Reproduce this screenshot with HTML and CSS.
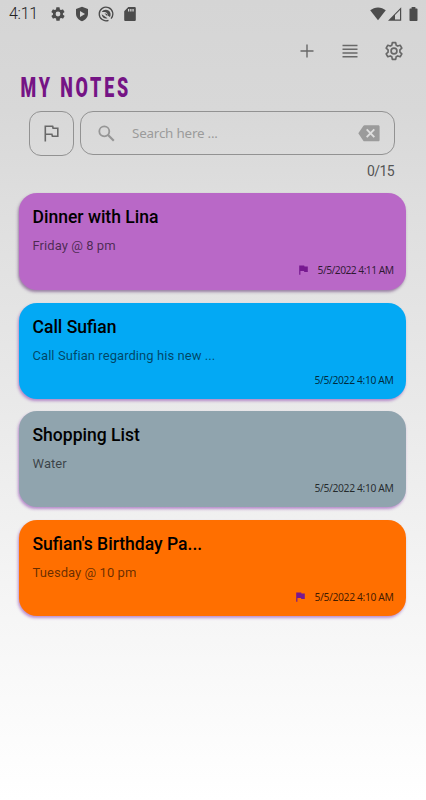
FILE: index.html
```html
<!DOCTYPE html>
<html lang="en">
<head>
<meta charset="utf-8">
<title>My Notes</title>
<link rel="stylesheet" href="styles.css">
</head>
<body>
<header class="status">
  <span class="clock">4:11</span>
  <svg class="s-gear" width="16" height="16" viewBox="0 0 24 24"><path d="M19.4 13a7.500 7.500 0 0 0 0-2l2.100-1.600a.5.5 0 0 0 .1-.7l-2-3.400a.5.5 0 0 0-.6-.2l-2.500 1a7.300 7.300 0 0 0-1.700-1L14.400 2.400a.5.5 0 0 0-.5-.4h-4a.5.5 0 0 0-.5.4L9 5.100a7.700 7.700 0 0 0-1.700 1l-2.500-1a.5.5 0 0 0-.6.2l-2 3.400a.5.5 0 0 0 .1.700L4.500 11a8 8 0 0 0 0 2l-2.100 1.600a.5.5 0 0 0-.1.700l2 3.400c.1.200.4.300.6.200l2.500-1a7.300 7.300 0 0 0 1.700 1l.4 2.700c0 .2.200.4.500.4h4c.2 0 .5-.2.5-.4l.4-2.700a7.700 7.700 0 0 0 1.700-1l2.500 1c.2.100.5 0 .6-.2l2-3.400a.5.5 0 0 0-.1-.7zM12 15.600a3.600 3.600 0 1 1 0-7.200 3.600 3.600 0 0 1 0 7.200z"/></svg>
  <svg class="s-shield" width="16" height="16" viewBox="0 0 16 16"><path fill-rule="evenodd" d="M8 .8l6 2.300v4.700c0 3.400-2.500 6.300-6 7.500-3.500-1.200-6-4.100-6-7.500V3.100zM6 4.900v6.200L11 8z"/></svg>
  <svg class="s-circle" width="16" height="16" viewBox="0 0 16 16"><path fill="none" stroke="#4c4c4c" stroke-width="1.300" d="M10.500 14.300A6.800 6.800 0 1 1 13 12.600"/><path d="M3.800 6C5 3.700 8.300 3 10.500 4.500s2.700 4.400 1.500 6.400L9.700 9.400c.2-1.900-1.500-3.400-3.400-3.300zM3.700 8.200l5.800 4.100c-2.400 1.100-5.600-.7-5.800-4.100z"/><path d="M6.500 7.300l2.600.6.200 2.300z"/></svg>
  <svg class="s-sd" width="12" height="14" viewBox="0 0 12 14"><path fill-rule="evenodd" d="M4.300 0h6.200c.8 0 1.300.5 1.300 1.200v11.500c0 .7-.5 1.300-1.300 1.300h-9C.7 14 .2 13.400.2 12.700V4.200zM4 2v2.500h1.300V2zm2.200 0v2.500h1.300V2zm2.200 0v2.500h1.300V2z"/></svg>
  <svg class="s-wifi" width="16" height="14" viewBox="0 0 16 14"><path d="M.2 3.300C4.700-.6 11.300-.6 15.800 3.300L8 13.200z"/></svg>
  <svg class="s-signal" width="14" height="14" viewBox="0 0 14 14"><path d="M0 13.700L13.200.2v13.500zM7 7.900v4.600h5V2.900z" fill-rule="evenodd"/></svg>
  <svg class="s-battery" width="9" height="14" viewBox="0 0 9 14"><path d="M2.600 0h3.800v1.400h1.400c.4 0 .7.300.7.700v11.200c0 .4-.3.700-.7.700H1.200c-.4 0-.7-.3-.7-.7V2.100c0-.4.3-.7.700-.7h1.400z"/></svg>
</header>
<nav class="actions">
  <svg width="14" height="14" viewBox="0 0 14 14"><path class="line" d="M7 .5v13M.5 7h13"/></svg>
  <svg width="16" height="14" viewBox="0 0 16 14"><path class="line" d="M.5 1.500h15M.5 5.200h15M.5 9h15M.5 12.700h15"/></svg>
  <svg width="20" height="20" viewBox="0 0 24 24"><g fill="none" stroke="#686868" stroke-width="2" stroke-linejoin="round"><circle cx="12" cy="12" r="3.500"/><path d="M10 2h4l.6 3 1.900 1.100 2.900-1 2 3.500L19.100 10.600v2.800l2.300 2-2 3.500-2.900-1-1.900 1.100-.6 3h-4l-.6-3-1.900-1.100-2.900 1-2-3.500 2.300-2v-2.800L2.600 8.600l2-3.500 2.900 1L9.400 5z"/></g></svg>
</nav>
<h1><span>MY NOTES</span></h1>
<section class="search">
  <div class="filter"><svg width="15" height="17" viewBox="0 0 15 17"><path fill="none" stroke="#686868" stroke-width="1.600" d="M1.300 16.500V1.300h7.300l.5 2h4.700v8H8.400l-.5-2H1.300M8.600 1.300l.5 2"/></svg></div>
  <div class="field">
    <svg width="17" height="17" viewBox="0 0 17 17"><circle cx="6.300" cy="6.300" r="5" fill="none" stroke="#969696" stroke-width="1.800"/><path fill="none" stroke="#969696" stroke-width="2.200" d="M10 10l5.800 5.800"/></svg>
    <span class="hint">Search here ...</span>
    <svg class="clear" width="22" height="17" viewBox="0 0 22 17"><path fill="#9b9b9b" d="M6.500.3h13.700c.8 0 1.400.6 1.400 1.400v13.200c0 .8-.6 1.400-1.400 1.400H6.500c-.5 0-.9-.2-1.200-.6L.3 8.300l5-7.400c.3-.4.700-.6 1.200-.6z"/><path stroke="#dedede" stroke-width="1.900" d="M8.700 4.400l7.600 7.800m0-7.800l-7.600 7.800"/></svg>
  </div>
</section>
<div class="count">0/15</div>
<main class="notes">
  <article class="note purple">
    <h2>Dinner with Lina</h2><p>Friday @ 8 pm</p>
    <footer><svg width="9" height="10" viewBox="0 0 9 10"><path d="M.2.400h5l.3 1.100h3.300v5.600H5.300L5 6.100H1.400v3.700H.2z"/></svg><time class="d11">5/5/2022 4:11 AM</time></footer>
  </article>
  <article class="note blue">
    <h2>Call Sufian</h2><p>Call Sufian regarding his new ...</p>
    <footer><time>5/5/2022 4:10 AM</time></footer>
  </article>
  <article class="note gray">
    <h2>Shopping List</h2><p>Water</p>
    <footer><time>5/5/2022 4:10 AM</time></footer>
  </article>
  <article class="note orange">
    <h2>Sufian's Birthday Pa...</h2><p>Tuesday @ 10 pm</p>
    <footer><svg width="9" height="10" viewBox="0 0 9 10"><path d="M.2.400h5l.3 1.100h3.300v5.600H5.300L5 6.100H1.400v3.700H.2z"/></svg><time>5/5/2022 4:10 AM</time></footer>
  </article>
</main>
</body>
</html>
```
FILE: styles.css
```css
* { box-sizing: border-box; }
html { height: 100%; }
body {
  margin: 0;
  height: 800px;
  overflow: hidden;
  font-family: Roboto, sans-serif;
  background: linear-gradient(#d5d5d5 0, #d8d8d8 110px, #dedede 200px, #e9e9e9 400px, #f5f5f5 600px, #fff 800px);
}
svg { display: block; flex: none; }
.status { height: 27px; display: flex; align-items: center; padding: 0 9px; fill: #4c4c4c; }
.clock { width: 28px; font-size: 16px; line-height: 27px; font-weight: 300; letter-spacing: -.3px; color: #222; white-space: nowrap; }
.s-gear { margin-left: 13px; }
.s-shield { margin-left: 8px; }
.s-circle { margin-left: 8px; }
.s-sd { margin-left: 10px; }
.s-wifi { margin-left: auto; }
.s-signal { margin-left: 2px; }
.s-battery { margin-left: 7px; margin-right: -1px; }
.actions { height: 48px; display: flex; justify-content: flex-end; align-items: center; gap: 26px; padding-right: 22px; }
.actions svg:first-child { margin-right: 2px; }
.line { fill: none; stroke: #686868; stroke-width: 1.4; }
h1 {
  margin: 0 0 0 20px;
  height: 36px;
  font-size: 27.500px;
  line-height: 24px;
  font-weight: 900;
  letter-spacing: 4.400px;
  color: #751485;
}
h1 span { display: inline-block; transform: translate(.5px, .5px) scaleX(.65); transform-origin: 0 0; white-space: nowrap; }
.search { display: flex; gap: 6px; padding-left: 29px; height: 46px; }
.filter, .field { border: 1px solid #929292; display: flex; align-items: center; }
.filter { width: 45px; height: 45px; border-radius: 12px; justify-content: center; }
.field { width: 315px; height: 44px; border-radius: 13px; padding: 0 14px 0 16.500px; }
.hint { margin-left: 17.500px; font-family: "Noto Sans", sans-serif; font-size: 13.400px; letter-spacing: -.2px; color: #9b9b9b; white-space: nowrap; }
.clear { margin-left: auto; }
.count { height: 36px; padding: 6px 32px 0 0; text-align: right; font-size: 14px; line-height: 16px; letter-spacing: -.6px; color: #555; }
.notes { display: flex; flex-direction: column; gap: 12px; padding: 0 20px 0 19px; }
.note {
  height: 96px;
  border-radius: 18px;
  padding: 14px 12.500px 0 13.500px;
  box-shadow: -1px 2px 3px rgba(123, 31, 162, .48);
  display: flex;
  flex-direction: column;
}
.note.purple { height: 97px; background: #b968c7; box-shadow: -1px 2px 3px rgba(80, 30, 100, .5); }
.note.blue { height: 95.500px; margin-top: 1px; background: #03a9f4; }
.note.gray { margin-top: .7px; background: #90a4ae; }
.note.orange { margin-top: .8px; background: #ff6f00; }
h2 { margin: 0; font-size: 17.550px; line-height: 20px; font-weight: 500; color: #000; }
p { margin: 10.500px 0 0; font-size: 13px; line-height: 16px; letter-spacing: .06px; color: rgba(0, 0, 0, .6); }
.orange p { margin-top: 11px; }
.note footer { display: flex; justify-content: flex-end; align-items: center; gap: 10px; margin-top: 9px; height: 14px; fill: #771990; }
.orange footer { margin-top: 9.500px; }
time { font-family: "Noto Sans", sans-serif; font-size: 10.300px; line-height: 14px; letter-spacing: -.36px; color: rgba(0, 0, 0, .75); white-space: nowrap; }
.d11 { letter-spacing: -.55px; }
```
